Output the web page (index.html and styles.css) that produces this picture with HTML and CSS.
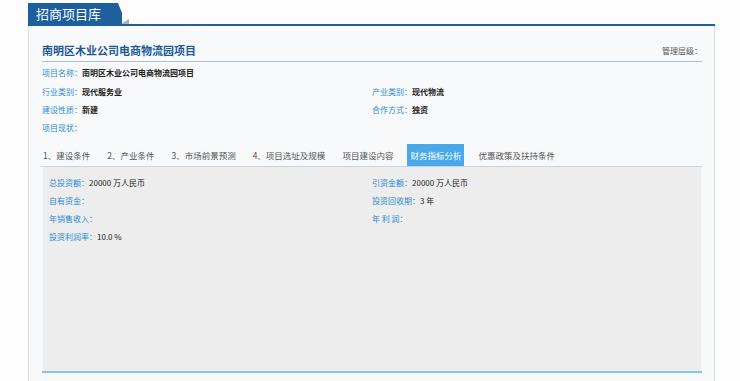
FILE: index.html
```html
<!doctype html>
<html lang="zh-CN">
<head>
  <meta charset="utf-8">
  <title>招商项目库</title>
  <link rel="stylesheet" href="styles.css">
</head>
<body>
  <div id="project-lib">
    <div class="lib-head">
      <div class="lib-tab">招商项目库</div>
      <svg class="lib-tail" width="12" height="23" viewBox="0 0 12 23">
        <polygon points="0,0 1,0 5,10 5,23 0,23" fill="#1f5f9e"/>
        <polygon points="4,21 12,16 12,21" fill="#a9b1b9"/>
      </svg>
    </div>

    <div class="panel">
      <div class="project-title">
        <h2>南明区木业公司电商物流园项目</h2>
        <span class="manage-level">管理层级：</span>
      </div>

      <div class="info-grid">
        <div class="field first full"><span class="label">项目名称：</span><span class="value">南明区木业公司电商物流园项目</span></div>
        <div class="field"><span class="label">行业类别：</span><span class="value">现代服务业</span></div>
        <div class="field"><span class="label">产业类别：</span><span class="value">现代物流</span></div>
        <div class="field"><span class="label">建设性质：</span><span class="value">新建</span></div>
        <div class="field"><span class="label">合作方式：</span><span class="value">独资</span></div>
        <div class="field full"><span class="label">项目现状：</span></div>
      </div>

      <div class="tabs">
        <a href="#" class="tab">1、建设条件</a>
        <a href="#" class="tab">2、产业条件</a>
        <a href="#" class="tab">3、市场前景预测</a>
        <a href="#" class="tab">4、项目选址及规模</a>
        <a href="#" class="tab">项目建设内容</a>
        <a href="#" class="tab active">财务指标分析</a>
        <a href="#" class="tab">优惠政策及扶持条件</a>
      </div>

      <div class="tab-body">
        <div class="field"><span class="label">总投资额：</span><span class="value">20000 万人民币</span></div>
        <div class="field"><span class="label">引资金额：</span><span class="value">20000 万人民币</span></div>
        <div class="field"><span class="label">自有资金：</span></div>
        <div class="field"><span class="label">投资回收期：</span><span class="value">3 年</span></div>
        <div class="field"><span class="label">年销售收入：</span></div>
        <div class="field"><span class="label">年 利 润：</span></div>
        <div class="field full"><span class="label">投资利润率：</span><span class="value">10.0 %</span></div>
      </div>
    </div>
  </div>
</body>
</html>
```

FILE: styles.css
```css
body {
  margin: 0;
  background: #fdfdfd;
  font-family: "Noto Sans CJK SC", "Liberation Sans", sans-serif;
  color: #333;
}
#project-lib {
  width: 687px;
  margin: 0 0 0 28px;
  padding-top: 3px;
}

/* header tab */
.lib-head {
  display: flex;
  align-items: flex-end;
  height: 21px;
  border-bottom: 2px solid #1f5f9e;
}
.lib-tab {
  height: 21px;
  line-height: 21px;
  padding: 0 0 0 8px;
  width: 81px;
  background: #1f5f9e;
  color: #fff;
  font-size: 13px;
}
.lib-tail {
  display: block;
  margin-bottom: -2px;
}

/* panel */
.panel {
  background: #f8f9fa;
  border-left: 1px solid #dadada;
  border-right: 1px solid #dadada;
  padding: 0 12px 12px 13px;
  min-height: 360px;
}
.project-title {
  display: flex;
  justify-content: space-between;
  align-items: center;
  padding: 17px 0 4px;
  border-bottom: 1px solid #a9c0d5;
}
.project-title h2 {
  margin: 0;
  font-size: 11px;
  line-height: 14px;
  color: #1d5a97;
  font-weight: bold;
}
.manage-level {
  font-size: 8px;
  color: #555;
}

.info-grid {
  display: grid;
  grid-template-columns: 1fr 1fr;
  padding-top: 2px;
}
.field {
  font-size: 8px;
  line-height: 18px;
  white-space: nowrap;
}
.field.full {
  grid-column: 1 / 3;
}
.field.first {
  margin-bottom: 1px;
}
.label {
  color: #2d8bd6;
}
.info-grid .value {
  color: #222;
  font-weight: bold;
}

/* tabs */
.tabs {
  display: flex;
  margin: 7px 0 0 -2px;
  border-bottom: 1px solid #c5d5e3;
}
.tab {
  display: block;
  font-size: 8.5px;
  line-height: 22px;
  padding: 0 3px;
  margin-right: 11px;
  color: #555;
  text-decoration: none;
}
.tab.active {
  background: #4aa9e9;
  color: #fff;
}

.tab-body {
  display: grid;
  grid-template-columns: 1fr 1fr;
  align-content: start;
  height: 197px;
  padding: 7px 7px 0;
  background: #ededed;
  border-bottom: 2px solid #86c6e8;
  box-shadow: inset 2px 0 2px -1px #f8f8f8, inset -2px 0 2px -1px #f8f8f8;
}
.tab-body .value {
  color: #222;
}
```
